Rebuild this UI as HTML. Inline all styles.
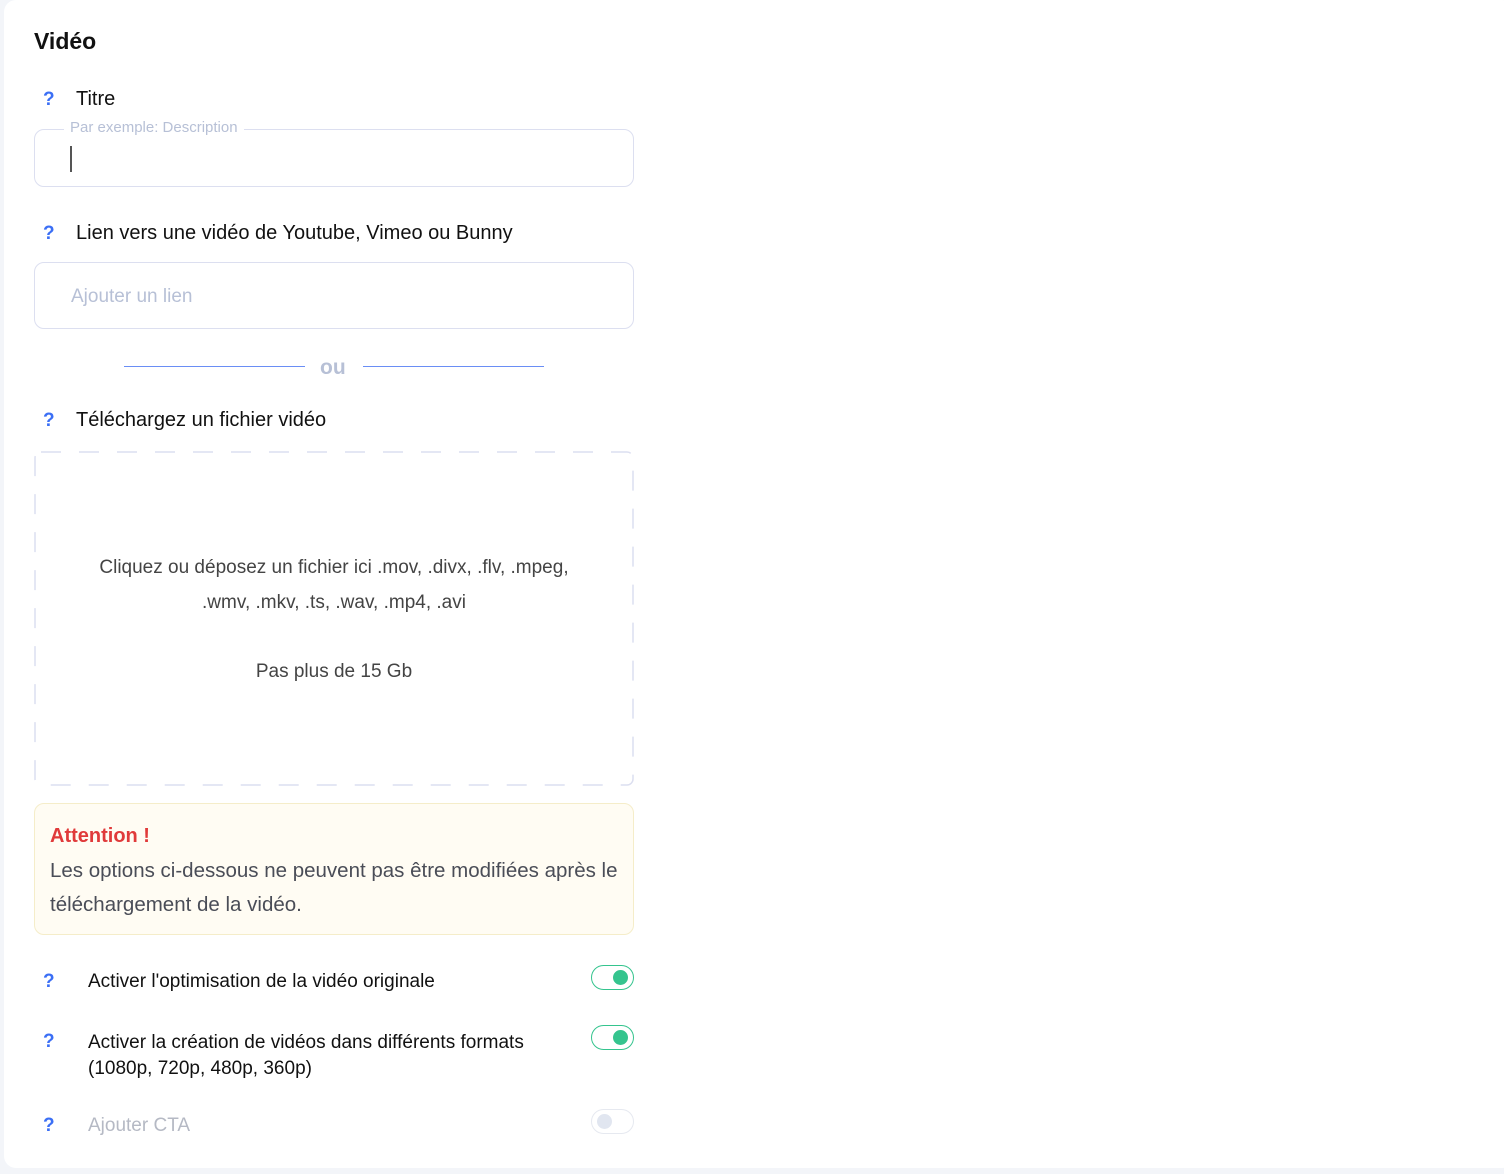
<!DOCTYPE html>
<html><head><meta charset="utf-8"><style>
*{margin:0;padding:0;box-sizing:border-box}
body{width:1504px;height:1174px;background:#f3f5f9;font-family:"Liberation Sans",sans-serif;position:relative;overflow:hidden}
.card{position:absolute;left:4px;top:0;width:1510px;height:1168px;background:#fff;border-radius:12px}
.a{position:absolute;white-space:nowrap}
.q{position:absolute;color:#3b6ff5;font-weight:bold;font-size:19px}
.lbl{font-size:20px;color:#111}
.box{position:absolute;left:34px;width:600px;border:1px solid #dcdff0;border-radius:10px}
.tog{position:absolute;left:591px;width:43px;height:25px;border-radius:13px;border:1.5px solid #35c48e;background:#fff}
.tog i{position:absolute;right:5px;top:4px;width:15px;height:15px;border-radius:50%;background:#35c48e}
</style></head><body>
<div class="card"></div>
<div class="a" style="left:34px;top:28px;font-size:23px;font-weight:bold;color:#111">Vidéo</div>

<div class="q" style="left:43px;top:89px">?</div>
<div class="a lbl" style="left:76px;top:88px">Titre</div>
<div class="box" style="top:129px;height:58px"></div>
<div class="a" style="left:64px;top:119px;background:#fff;padding:0 6px;font-size:15px;color:#b7c0d6">Par exemple: Description</div>
<div class="a" style="left:70px;top:146px;width:2px;height:26px;background:#555"></div>

<div class="q" style="left:43px;top:223px">?</div>
<div class="a lbl" style="left:76px;top:222px">Lien vers une vidéo de Youtube, Vimeo ou Bunny</div>
<div class="box" style="top:262px;height:67px"></div>
<div class="a" style="left:71px;top:286px;font-size:19px;color:#b7c0d6">Ajouter un lien</div>

<div class="a" style="left:124px;top:366px;width:181px;height:1px;background:#6a8ef5"></div>
<div class="a" style="left:363px;top:366px;width:181px;height:1px;background:#6a8ef5"></div>
<div class="a" style="left:320px;top:356px;font-size:21px;font-weight:bold;color:#b7c0d6">ou</div>

<div class="q" style="left:43px;top:410px">?</div>
<div class="a lbl" style="left:76px;top:409px">Téléchargez un fichier vidéo</div>
<svg class="a" style="left:34px;top:451px" width="601" height="336"><rect x="1" y="1" width="598" height="333" rx="6" fill="none" stroke="#dcdff0" stroke-width="1.5" stroke-dasharray="20 18"/></svg>
<div class="a" style="left:34px;top:550px;width:600px;text-align:center;font-size:19px;line-height:35px;color:#444;white-space:normal">Cliquez ou déposez un fichier ici .mov, .divx, .flv, .mpeg,<br>.wmv, .mkv, .ts, .wav, .mp4, .avi</div>
<div class="a" style="left:34px;top:661px;width:600px;text-align:center;font-size:19px;color:#444">Pas plus de 15 Gb</div>

<div class="box" style="top:803px;height:132px;background:#fffcf3;border-color:#f5edc9"></div>
<div class="a" style="left:50px;top:825px;font-size:20px;font-weight:bold;color:#e03a3a">Attention !</div>
<div class="a" style="left:50px;top:854px;font-size:20.5px;line-height:34px;color:#4a4d57">Les options ci-dessous ne peuvent pas être modifiées après le<br>téléchargement de la vidéo.</div>

<div class="q" style="left:43px;top:971px">?</div>
<div class="a" style="left:88px;top:971px;font-size:19px;color:#111">Activer l'optimisation de la vidéo originale</div>
<div class="tog" style="top:965px"><i></i></div>

<div class="q" style="left:43px;top:1031px">?</div>
<div class="a" style="left:88px;top:1030px;font-size:19px;line-height:26px;color:#111">Activer la création de vidéos dans différents formats<br>(1080p, 720p, 480p, 360p)</div>
<div class="tog" style="top:1025px"><i></i></div>

<div class="q" style="left:43px;top:1115px">?</div>
<div class="a" style="left:88px;top:1115px;font-size:19px;color:#b5b9c4">Ajouter CTA</div>
<div class="tog" style="top:1109px;border-color:#e6e9f0"><i style="left:5px;right:auto;background:#e1e6f0"></i></div>
</body></html>
